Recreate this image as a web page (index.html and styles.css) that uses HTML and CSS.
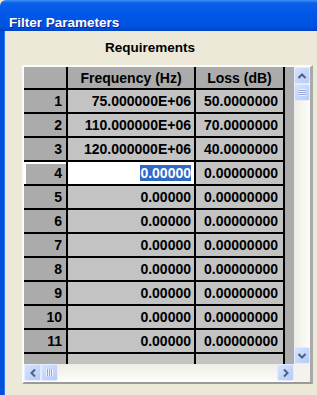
FILE: index.html
```html
<!DOCTYPE html>
<html lang="en">

<head>
  <meta charset="UTF-8" />
  <meta name="viewport" content="width=device-width, initial-scale=1.0" />
  <title>Filter Parameters</title>
  <link rel="stylesheet" href="styles.css">
</head>

<body>
  <div class="window">
    <div class="titlebar">Filter Parameters</div>

    <div class="pane">
      <div class="caption">Requirements</div>

      <div class="frame">
        <div class="cells">
          <div class="sheet">
            <div class="hd"></div>
            <div class="hd">Frequency (Hz)</div>
            <div class="hd">Loss (dB)</div>

            <div class="rh">1</div>
            <div class="c">75.000000E+06</div>
            <div class="c loss">50.0000000</div>

            <div class="rh">2</div>
            <div class="c">110.000000E+06</div>
            <div class="c loss">70.0000000</div>

            <div class="rh">3</div>
            <div class="c">120.000000E+06</div>
            <div class="c loss">40.0000000</div>

            <div class="rh cur">4</div>
            <div class="c edit"><span class="sel">0.00000</span></div>
            <div class="c loss">0.00000000</div>

            <div class="rh">5</div>
            <div class="c">0.00000</div>
            <div class="c loss">0.00000000</div>

            <div class="rh">6</div>
            <div class="c">0.00000</div>
            <div class="c loss">0.00000000</div>

            <div class="rh">7</div>
            <div class="c">0.00000</div>
            <div class="c loss">0.00000000</div>

            <div class="rh">8</div>
            <div class="c">0.00000</div>
            <div class="c loss">0.00000000</div>

            <div class="rh">9</div>
            <div class="c">0.00000</div>
            <div class="c loss">0.00000000</div>

            <div class="rh">10</div>
            <div class="c">0.00000</div>
            <div class="c loss">0.00000000</div>

            <div class="rh">11</div>
            <div class="c">0.00000</div>
            <div class="c loss">0.00000000</div>

            <div class="rh"></div>
            <div class="c"></div>
            <div class="c loss"></div>
          </div>
        </div>

        <div class="vscroll">
          <div class="btn">
            <svg width="10" height="10" viewBox="0 0 10 10"><polyline points="1.5,7 5,3.5 8.5,7" fill="none" stroke="#4d6185" stroke-width="2" /></svg>
          </div>
          <div class="thumb"><span class="grip-h"></span></div>
          <div class="track"></div>
          <div class="btn">
            <svg width="10" height="10" viewBox="0 0 10 10"><polyline points="1.5,3 5,6.5 8.5,3" fill="none" stroke="#4d6185" stroke-width="2" /></svg>
          </div>
        </div>

        <div class="hscroll">
          <div class="btn">
            <svg width="10" height="10" viewBox="0 0 10 10"><polyline points="7,1.5 3.5,5 7,8.5" fill="none" stroke="#4d6185" stroke-width="2" /></svg>
          </div>
          <div class="thumb"><span class="grip-v"></span></div>
          <div class="track"></div>
          <div class="btn">
            <svg width="10" height="10" viewBox="0 0 10 10"><polyline points="3,1.5 6.5,5 3,8.5" fill="none" stroke="#4d6185" stroke-width="2" /></svg>
          </div>
        </div>

        <div class="corner"></div>
      </div>
    </div>
  </div>
</body>

</html>
```

FILE: styles.css
```css
:root {
  --face: #ece9d8;
  --title: #0054e3;
  --hdr: #ababab;
  --cell: #c3c3c3;
  --btn: #c3d4fc;
  --arrow: #4d6185;
}

* {
  margin: 0;
  padding: 0;
  box-sizing: border-box;
}

body {
  width: 317px;
  height: 395px;
  overflow: hidden;
  background-color: var(--face);
  font-family: 'Liberation Sans', Arial, sans-serif;
  font-weight: bold;
  color: #000;
}

.window {
  height: 395px;
  display: flex;
  flex-direction: column;
}

.titlebar {
  height: 31px;
  padding: 15px 0 0 9px;
  font-size: 13.5px;
  line-height: 15px;
  color: #fff;
  text-shadow: 1px 1px 0 #0a2a9a;
  background: linear-gradient(#3d8ff8 0, #0a5fe9 3px, #0058e8 45%, #0052e0 85%, #0043c4 100%);
  border-top-left-radius: 6px;
}

.pane {
  flex-grow: 1;
  border-left: 4px solid #0050dc;
  box-shadow: inset 1px 0 0 #2e74ef;
}

.caption {
  width: 292px;
  margin-top: 9px;
  text-align: center;
  font-size: 13.5px;
  line-height: 16px;
}

/* grid box with its scroll bars */
.frame {
  margin: 9px 0 0 18px;
  width: 291px;
  height: 319px;
  border-top: 2px solid #fbfbf9;
  border-left: 2px solid #fbfbf9;
  border-right: 3px solid #a9a9a9;
  border-bottom: 2px solid #9a9a9a;
  display: grid;
  grid-template-columns: 270px 16px;
  grid-template-rows: 297px 18px;
}

.cells {
  background-color: var(--hdr);
  overflow: hidden;
}

.sheet {
  display: grid;
  grid-template-columns: 42px 126px 87px;
  grid-template-rows: 21px;
  grid-auto-rows: 22px;
  gap: 2px;
  padding-right: 2px;
  width: fit-content;
  background-color: #000;
  font-size: 14px;
}

.hd,
.rh,
.c {
  display: flex;
  align-items: center;
  line-height: 16px;
  white-space: nowrap;
}

.hd {
  background-color: var(--hdr);
  justify-content: center;
}

.rh {
  background-color: var(--hdr);
  justify-content: flex-end;
  padding-right: 4px;
}

.rh.cur {
  box-shadow: inset 2px 2px 0 #fff;
}

.c {
  background-color: var(--cell);
  justify-content: flex-end;
  padding-right: 3px;
}

.c.loss {
  padding-right: 5px;
}

.c.edit {
  background-color: #fff;
}

.sel {
  background-color: #316ac5;
  color: #fff;
}

/* XP style scroll bars */
.vscroll,
.hscroll {
  display: flex;
}

.vscroll {
  flex-direction: column;
  background: linear-gradient(to right, #eeede5, #fdfdfa);
}

.hscroll {
  background: linear-gradient(#eeede5, #fdfdfa);
  padding-bottom: 1px;
}

.btn,
.thumb {
  flex-shrink: 0;
  display: flex;
  align-items: center;
  justify-content: center;
  background: linear-gradient(135deg, #d6e2fd, #b6cbf8);
  border: 1px solid #e4ecfe;
  border-radius: 2px;
}

.vscroll .btn,
.vscroll .thumb {
  height: 17px;
}

.hscroll .btn,
.hscroll .thumb {
  width: 17px;
}

.track {
  flex-grow: 1;
}

.grip-h {
  width: 7px;
  height: 7px;
  background: repeating-linear-gradient(#eef3fe 0, #eef3fe 1px, #8ea6d8 1px, #8ea6d8 2px);
}

.grip-v {
  width: 7px;
  height: 7px;
  background: repeating-linear-gradient(to right, #eef3fe 0, #eef3fe 1px, #8ea6d8 1px, #8ea6d8 2px);
}

.corner {
  background-color: #f3f2ec;
}
```
